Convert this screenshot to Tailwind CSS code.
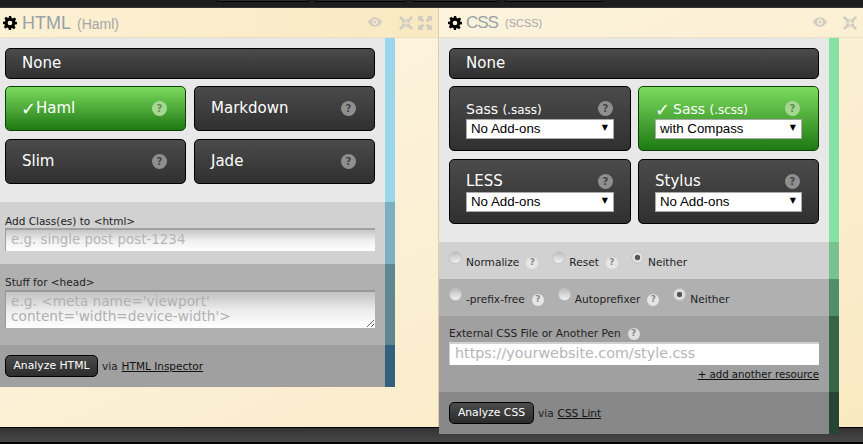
<!DOCTYPE html>
<html lang="en">
<head>
  <meta charset="UTF-8">
  <meta name="viewport" content="width=device-width, initial-scale=1.0">
  <title>Pen Settings</title>
  <script src="https://cdn.jsdelivr.net/npm/@tailwindcss/browser@4"></script>
</head>
<body class="w-[863px] h-[444px] overflow-hidden bg-[#1d1d1d] font-['DejaVu_Sans',sans-serif] text-[#222]">
  <!-- top bar, only the bottom of the buttons shows -->
  <div class="h-[8px] bg-[#1d1d1d] border-b border-[#333] flex pl-[216px]">
    <div class="w-[93px] h-[2px] bg-[#2c2c2c] border border-t-0 border-black rounded-b-[3px] mr-[6px]"></div>
    <div class="w-[91px] h-[2px] bg-[#2c2c2c] border border-t-0 border-black rounded-b-[3px] mr-[6px]"></div>
    <div class="w-[86px] h-[2px] bg-[#2c2c2c] border border-t-0 border-black rounded-b-[3px] mr-[6px]"></div>
    <div class="w-[99px] h-[2px] bg-[#2c2c2c] border border-t-0 border-black rounded-b-[3px]"></div>
  </div>

  <main class="flex h-[419px] bg-linear-to-br from-[#fef7e7] to-[#f9e9c2]">
    <!-- HTML panel -->
    <section class="w-[439px] border-r border-[#dccfa8]">
      <header class="h-[30px] flex items-center pl-[3px] pr-[6px] border-b border-[#eadfbe] bg-linear-to-r from-[#fdf1d4] to-[#f9e9c2] font-['Liberation_Sans',sans-serif]">
        <svg class="w-[14px] h-[14px]" viewBox="0 0 24 24" fill="#000"><path fill-rule="evenodd" d="M10 0h4l.7 3.4 2.1.9 2.9-1.9 2.9 2.9-1.9 2.9.9 2.1L24 10v4l-3.400.7-.9 2.100 1.900 2.900-2.900 2.900-2.900-1.900-2.100.9L14 24h-4l-.7-3.400-2.100-.9-2.900 1.900-2.900-2.900 1.900-2.900-.9-2.100L0 14v-4l3.400-.7.9-2.100-1.900-2.900 2.900-2.900 2.900 1.900 2.100-.9L10 0zm2 8a4 4 0 1 0 0 8 4 4 0 0 0 0-8z"/></svg>
        <span class="ml-[5px] text-[18px] leading-none text-[#98a2a8]">HTML</span>
        <span class="ml-[6px] mt-[2px] text-[14px] leading-none text-[#a5a5a5]">(Haml)</span>
        <svg class="ml-auto -mt-[2px] w-[14px] h-[14px]" viewBox="0 0 24 24" fill="#cfcdc2"><path fill-rule="evenodd" d="M12 4C6 4 1.500 9 0 12c1.500 3 6 8 12 8s10.500-5 12-8c-1.500-3-6-8-12-8zm0 3a5 5 0 1 1 0 10 5 5 0 0 1 0-10zm0 2.500a2.500 2.500 0 1 0 0 5 2.500 2.500 0 0 0 0-5z"/></svg>
        <svg class="ml-[17px] w-[14px] h-[14px]" viewBox="0 0 24 24" fill="#cfcdc2"><path d="M3 0l6 6 2-2v7H4l2-2-6-6zM21 0l3 3-6 6 2 2h-7V4l2 2zM4 13h7v7l-2-2-6 6-3-3 6-6zM13 13h7l-2 2 6 6-3 3-6-6-2 2z"/></svg>
        <svg class="ml-[5px] w-[14px] h-[14px]" viewBox="0 0 24 24" fill="#cfcdc2"><path d="M0 0h9L6.500 2.500 11 7l-4 4-4.500-4.500L0 9zM24 0v9l-2.500-2.500L17 11l-4-4 4.500-4.500L15 0zM7 13l4 4-4.500 4.500L9 24H0v-9l2.500 2.500zM17 13l4.500 4.500L24 15v9h-9l2.500-2.500L13 17z"/></svg>
      </header>

      <div class="w-[395px] h-[164px] pl-[5px] pr-[10px] pt-[10px] bg-[#e8e8e8] border-r-[10px] border-[#99d6eb] box-border">
        <div class="h-[31px] flex items-center pl-[16px] mb-[7px] rounded-[5px] border border-black bg-linear-to-b from-[#4b4b4b] to-[#303030] text-white text-[15px]">None</div>
        <div class="grid grid-cols-2 gap-[8px]">
          <div class="h-[45px] flex items-center justify-between pl-[15px] pr-[18px] rounded-[5px] border border-[#0e3f08] bg-linear-to-b from-[#7cdc5e] to-[#1b7a10] text-white text-[15px]">
            <span class="flex items-center"><span class="text-[18px] leading-none w-[15px]">✓</span>Haml</span>
            <span class="w-[15px] h-[15px] rounded-full bg-[#a6d893] text-[#5d8f52] text-[10px] font-bold flex items-center justify-center">?</span>
          </div>
          <div class="h-[45px] flex items-center justify-between pl-[16px] pr-[18px] rounded-[5px] border border-black bg-linear-to-b from-[#4b4b4b] to-[#303030] text-white text-[15px]">
            <span>Markdown</span>
            <span class="w-[15px] h-[15px] rounded-full bg-[#8f8f8f] text-[#444] text-[10px] font-bold flex items-center justify-center">?</span>
          </div>
          <div class="h-[45px] flex items-center justify-between pl-[16px] pr-[18px] rounded-[5px] border border-black bg-linear-to-b from-[#4b4b4b] to-[#303030] text-white text-[15px]">
            <span>Slim</span>
            <span class="w-[15px] h-[15px] rounded-full bg-[#8f8f8f] text-[#444] text-[10px] font-bold flex items-center justify-center">?</span>
          </div>
          <div class="h-[45px] flex items-center justify-between pl-[16px] pr-[18px] rounded-[5px] border border-black bg-linear-to-b from-[#4b4b4b] to-[#303030] text-white text-[15px]">
            <span>Jade</span>
            <span class="w-[15px] h-[15px] rounded-full bg-[#8f8f8f] text-[#444] text-[10px] font-bold flex items-center justify-center">?</span>
          </div>
        </div>
      </div>

      <div class="w-[395px] h-[62px] pl-[5px] pr-[10px] pt-[12px] bg-[#d1d1d1] border-r-[10px] border-[#7bb0c2] box-border">
        <label class="block text-[10.500px] leading-[14px] h-[14px]">Add Class(es) to &lt;html&gt;</label>
        <input type="text" placeholder="e.g. single post post-1234" class="block w-full h-[23px] px-[5px] pb-[3px] border-t-2 border-l border-[#a0a0a0] bg-linear-to-b from-[#c6c6c6] via-[#efefef] to-white text-[13.400px] placeholder:text-[#b5b5b5] outline-none">
      </div>

      <div class="w-[395px] h-[81px] pl-[5px] pr-[10px] pt-[11px] bg-[#b0b0b0] border-r-[10px] border-[#5f8792] box-border">
        <label class="block text-[10.500px] leading-[14px] h-[15px]">Stuff for &lt;head&gt;</label>
        <textarea placeholder="e.g. &lt;meta name='viewport' content='width=device-width'&gt;" class="block w-full h-[38px] px-[5px] pt-[2px] border-t-2 border-l border-[#999] bg-linear-to-b from-[#c2c2c2] via-[#ececec] to-white text-[13.700px] leading-[15px] placeholder:text-[#b0b0b0] outline-none"></textarea>
      </div>

      <div class="w-[395px] h-[42px] flex items-center pl-[5px] pr-[10px] bg-[#a0a0a0] border-r-[10px] border-[#34607f] box-border text-[10.500px]">
        <button class="h-[22px] w-[93px] pt-[1px] rounded-[5px] border border-black bg-linear-to-b from-[#4b4b4b] to-[#2c2c2c] text-white text-[10.800px]">Analyze HTML</button>
        <span class="ml-[4px] mt-[2px]">via</span>
        <a href="#" class="ml-[4px] mt-[2px] underline text-[#111]">HTML Inspector</a>
      </div>
    </section>

    <!-- CSS panel, runs a little past the bottom bar -->
    <section class="relative z-10 w-[424px] h-[426px]">
      <header class="h-[30px] flex items-center pl-[9px] pr-[6px] border-b border-[#eadfbe] font-['Liberation_Sans',sans-serif]">
        <svg class="w-[14px] h-[14px]" viewBox="0 0 24 24" fill="#000"><path fill-rule="evenodd" d="M10 0h4l.7 3.4 2.1.9 2.9-1.9 2.9 2.9-1.9 2.9.9 2.1L24 10v4l-3.400.7-.9 2.100 1.900 2.900-2.900 2.900-2.900-1.900-2.100.9L14 24h-4l-.7-3.400-2.100-.9-2.900 1.900-2.900-2.900 1.900-2.900-.9-2.100L0 14v-4l3.400-.7.9-2.100-1.900-2.900 2.900-2.900 2.900 1.900 2.100-.9L10 0zm2 8a4 4 0 1 0 0 8 4 4 0 0 0 0-8z"/></svg>
        <span class="ml-[4px] text-[17px] tracking-[-1px] leading-none text-[#98a2a8]">CSS</span>
        <span class="ml-[7px] mt-[2px] text-[11px] leading-none text-[#a5a5a5]">(SCSS)</span>
        <svg class="ml-auto -mt-[2px] w-[14px] h-[14px]" viewBox="0 0 24 24" fill="#cfcdc2"><path fill-rule="evenodd" d="M12 4C6 4 1.500 9 0 12c1.500 3 6 8 12 8s10.500-5 12-8c-1.500-3-6-8-12-8zm0 3a5 5 0 1 1 0 10 5 5 0 0 1 0-10zm0 2.500a2.500 2.500 0 1 0 0 5 2.500 2.500 0 0 0 0-5z"/></svg>
        <svg class="ml-[16px] w-[14px] h-[14px]" viewBox="0 0 24 24" fill="#cfcdc2"><path d="M3 0l6 6 2-2v7H4l2-2-6-6zM21 0l3 3-6 6 2 2h-7V4l2 2zM4 13h7v7l-2-2-6 6-3-3 6-6zM13 13h7l-2 2 6 6-3 3-6-6-2 2z"/></svg>
      </header>

      <div class="w-[400px] h-[204px] pl-[10px] pr-[10px] pt-[10px] bg-[#e8e8e8] border-r-[10px] border-[#85e2a5] box-border">
        <div class="h-[31px] flex items-center pl-[16px] mb-[7px] rounded-[5px] border border-black bg-linear-to-b from-[#4b4b4b] to-[#303030] text-white text-[15px]">None</div>
        <div class="grid grid-cols-[182px_181px] gap-x-[7px] gap-y-[8px]">
          <div class="h-[65px] pl-[16px] pr-[16px] pt-[13px] rounded-[5px] border border-black bg-linear-to-b from-[#4b4b4b] to-[#303030] text-white text-[14px]">
            <div class="flex items-center justify-between h-[17px] pr-[1px] mb-[2px]">
              <span class="mt-[2px]">Sass <span class="text-[12px]">(.sass)</span></span>
              <span class="w-[15px] h-[15px] rounded-full bg-[#8f8f8f] text-[#444] text-[10px] font-bold flex items-center justify-center">?</span>
            </div>
            <div class="relative">
              <select class="block w-[148px] h-[20px] pb-[1px] appearance-none rounded-none bg-white border border-[#aaa] pl-[4px] text-black text-[13.300px] leading-[17px] font-['Liberation_Sans',sans-serif]"><option>No Add-ons</option></select>
              <span class="absolute right-[6px] top-[2px] text-black text-[8px] leading-[14px]">▼</span>
            </div>
          </div>
          <div class="h-[65px] pl-[16px] pr-[16px] pt-[13px] rounded-[5px] border border-[#0e3f08] bg-linear-to-b from-[#7cdc5e] to-[#1b7a10] text-white text-[14px]">
            <div class="flex items-center justify-between h-[17px] pr-[2px] mb-[2px]">
              <span class="flex items-center mt-[2px]"><span class="text-[18px] leading-none w-[18px]">✓</span>Sass&nbsp;<span class="text-[12px]">(.scss)</span></span>
              <span class="w-[15px] h-[15px] rounded-full bg-[#a6d893] text-[#5d8f52] text-[10px] font-bold flex items-center justify-center">?</span>
            </div>
            <div class="relative">
              <select class="block w-[147px] h-[20px] pb-[1px] appearance-none rounded-none bg-white border border-[#aaa] pl-[4px] text-black text-[13.300px] leading-[17px] font-['Liberation_Sans',sans-serif]"><option>with Compass</option></select>
              <span class="absolute right-[6px] top-[2px] text-black text-[8px] leading-[14px]">▼</span>
            </div>
          </div>
          <div class="h-[65px] pl-[16px] pr-[16px] pt-[13px] rounded-[5px] border border-black bg-linear-to-b from-[#4b4b4b] to-[#303030] text-white text-[15px]">
            <div class="flex items-center justify-between h-[17px] pr-[1px] mb-[2px]">
              <span>LESS</span>
              <span class="w-[15px] h-[15px] rounded-full bg-[#8f8f8f] text-[#444] text-[10px] font-bold flex items-center justify-center">?</span>
            </div>
            <div class="relative">
              <select class="block w-[148px] h-[20px] pb-[1px] appearance-none rounded-none bg-white border border-[#aaa] pl-[4px] text-black text-[13.300px] leading-[17px] font-['Liberation_Sans',sans-serif]"><option>No Add-ons</option></select>
              <span class="absolute right-[6px] top-[2px] text-black text-[8px] leading-[14px]">▼</span>
            </div>
          </div>
          <div class="h-[65px] pl-[16px] pr-[16px] pt-[13px] rounded-[5px] border border-black bg-linear-to-b from-[#4b4b4b] to-[#303030] text-white text-[15px]">
            <div class="flex items-center justify-between h-[17px] pr-[2px] mb-[2px]">
              <span>Stylus</span>
              <span class="w-[15px] h-[15px] rounded-full bg-[#8f8f8f] text-[#444] text-[10px] font-bold flex items-center justify-center">?</span>
            </div>
            <div class="relative">
              <select class="block w-[147px] h-[20px] pb-[1px] appearance-none rounded-none bg-white border border-[#aaa] pl-[4px] text-black text-[13.300px] leading-[17px] font-['Liberation_Sans',sans-serif]"><option>No Add-ons</option></select>
              <span class="absolute right-[6px] top-[2px] text-black text-[8px] leading-[14px]">▼</span>
            </div>
          </div>
        </div>
      </div>

      <div class="w-[400px] h-[37px] flex items-center pl-[10px] bg-[#d1d1d1] border-r-[10px] border-[#78c28f] box-border text-[10.600px]">
        <input type="radio" name="reset" class="appearance-none w-[13px] h-[13px] -mt-[6px] rounded-full bg-linear-to-b from-[#bdbdbd] to-[#f2f2f2] border border-[#c4c4c4]">
        <span class="ml-[4px] mt-[4px]">Normalize</span>
        <span class="ml-[7px] mt-[4px] w-[12px] h-[12px] rounded-full bg-[#e6e6e6] text-[#888] text-[9px] font-bold flex items-center justify-center">?</span>
        <input type="radio" name="reset" class="ml-[14px] appearance-none w-[13px] h-[13px] -mt-[6px] rounded-full bg-linear-to-b from-[#bdbdbd] to-[#f2f2f2] border border-[#c4c4c4]">
        <span class="ml-[4px] mt-[4px]">Reset</span>
        <span class="ml-[7px] mt-[4px] w-[12px] h-[12px] rounded-full bg-[#e6e6e6] text-[#888] text-[9px] font-bold flex items-center justify-center">?</span>
        <input type="radio" name="reset" checked class="ml-[13px] appearance-none w-[13px] h-[13px] -mt-[6px] rounded-full bg-[radial-gradient(circle,#555_0,#555_30%,#e2e2e2_40%,#d4d4d4_100%)] border border-[#c4c4c4]">
        <span class="ml-[4px] mt-[4px]">Neither</span>
      </div>

      <div class="w-[400px] h-[37px] flex items-center pl-[10px] bg-[#b0b0b0] border-r-[10px] border-[#4f8f68] box-border text-[10.600px]">
        <input type="radio" name="prefix" class="appearance-none w-[13px] h-[13px] -mt-[6px] rounded-full bg-linear-to-b from-[#bdbdbd] to-[#f2f2f2] border border-[#c4c4c4]">
        <span class="ml-[4px] mt-[4px]">-prefix-free</span>
        <span class="ml-[7px] mt-[4px] w-[12px] h-[12px] rounded-full bg-[#e6e6e6] text-[#888] text-[9px] font-bold flex items-center justify-center">?</span>
        <input type="radio" name="prefix" class="ml-[14px] appearance-none w-[13px] h-[13px] -mt-[6px] rounded-full bg-linear-to-b from-[#bdbdbd] to-[#f2f2f2] border border-[#c4c4c4]">
        <span class="ml-[4px] mt-[4px]">Autoprefixer</span>
        <span class="ml-[7px] mt-[4px] w-[12px] h-[12px] rounded-full bg-[#e6e6e6] text-[#888] text-[9px] font-bold flex items-center justify-center">?</span>
        <input type="radio" name="prefix" checked class="ml-[14px] appearance-none w-[13px] h-[13px] -mt-[6px] rounded-full bg-[radial-gradient(circle,#555_0,#555_30%,#e2e2e2_40%,#d4d4d4_100%)] border border-[#c4c4c4]">
        <span class="ml-[4px] mt-[4px]">Neither</span>
      </div>

      <div class="w-[400px] h-[76px] pl-[10px] pr-[10px] pt-[11px] bg-[#a0a0a0] border-r-[10px] border-[#356447] box-border">
        <div class="flex items-center h-[14px] text-[10.600px] mb-[1px]">
          <span>External CSS File or Another Pen</span>
          <span class="ml-[7px] w-[12px] h-[12px] rounded-full bg-[#e0e0e0] text-[#888] text-[9px] font-bold flex items-center justify-center">?</span>
        </div>
        <input type="text" placeholder="https://yourwebsite.com/style.css" class="block w-full h-[23px] px-[5px] pb-[3px] border-t-2 border-l border-[#d0d0d0] bg-white text-[14.300px] placeholder:text-[#b5b5b5] outline-none">
        <div class="text-right mt-[3px] text-[10.200px] leading-[14px]"><a href="#" class="underline text-[#111]">+ add another resource</a></div>
      </div>

      <div class="w-[400px] h-[42px] flex items-center pl-[10px] bg-[#888] border-r-[10px] border-[#254432] box-border text-[10.500px]">
        <button class="h-[22px] w-[85px] pt-[1px] rounded-[5px] border border-black bg-linear-to-b from-[#4b4b4b] to-[#2c2c2c] text-white text-[10.800px]">Analyze CSS</button>
        <span class="ml-[4px] mt-[2px]">via</span>
        <a href="#" class="ml-[4px] mt-[2px] underline text-[#111]">CSS Lint</a>
      </div>
    </section>
  </main>

  <!-- bottom bar -->
  <footer class="h-[17px] border-t border-b-2 border-black bg-linear-to-b from-[#333] to-[#484848]"></footer>
</body>
</html>
